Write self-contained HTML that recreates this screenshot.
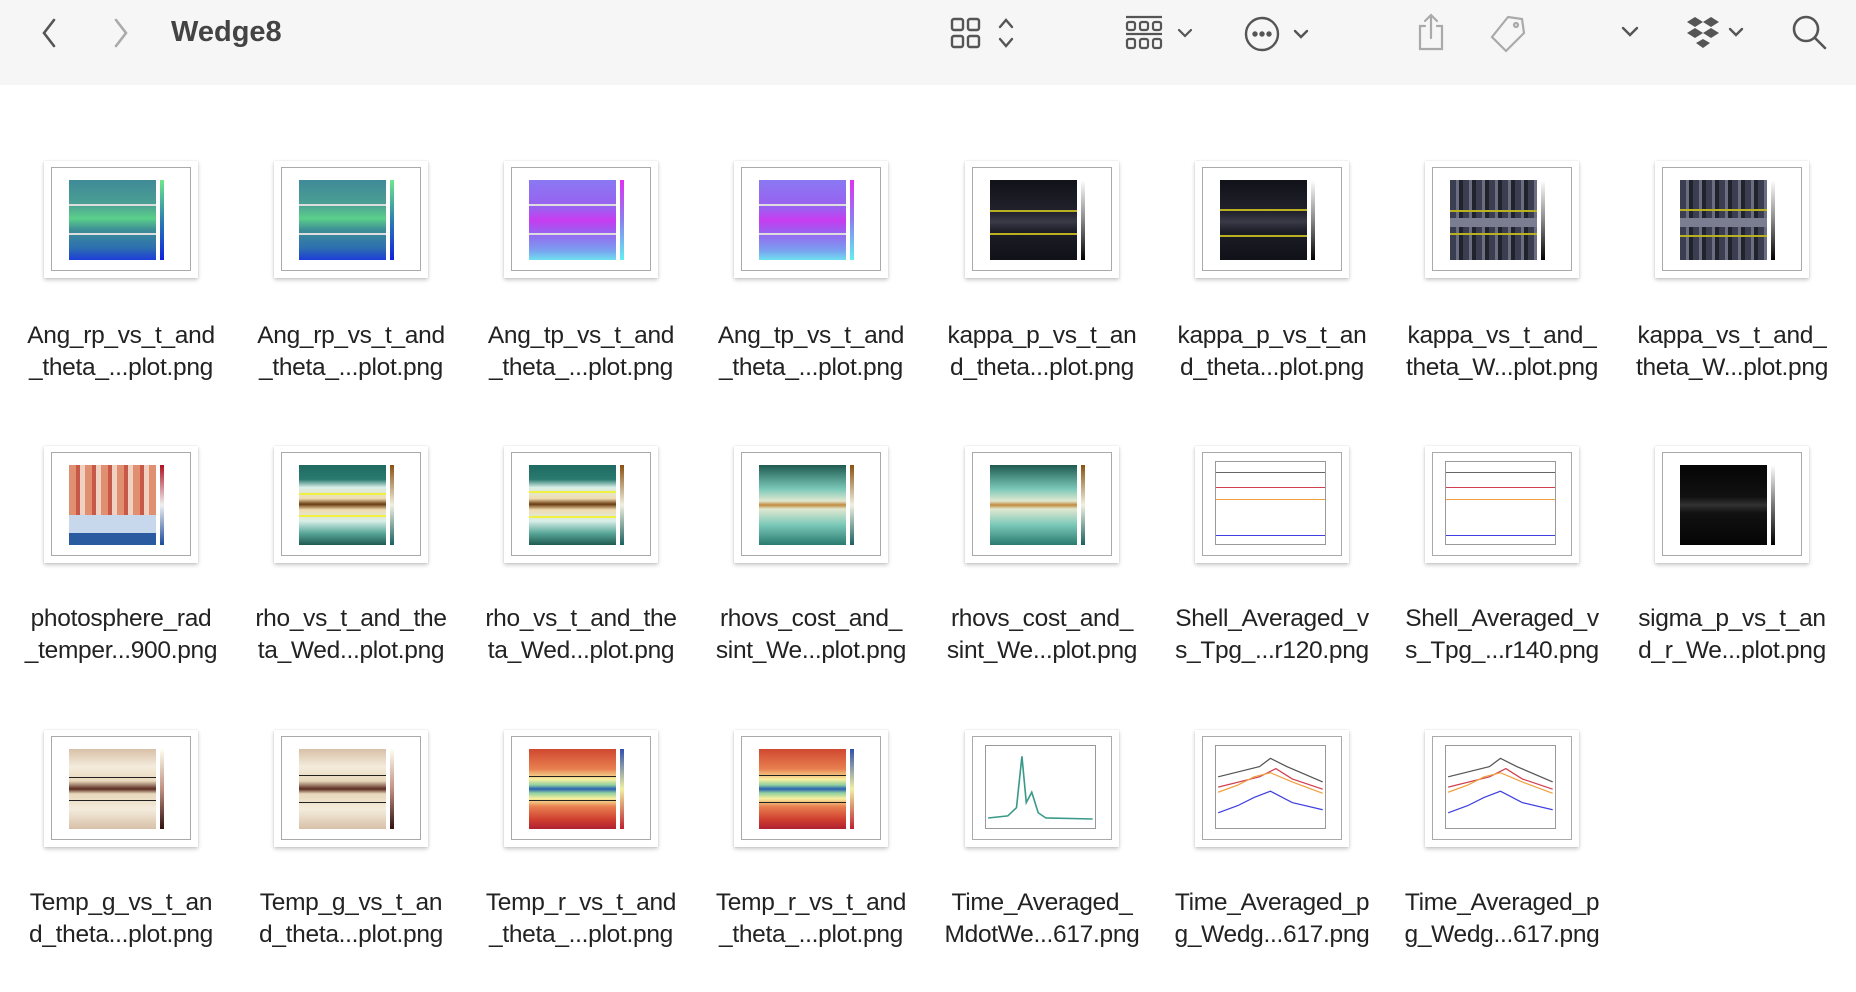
<!DOCTYPE html>
<html><head><meta charset="utf-8"><style>
*{margin:0;padding:0;box-sizing:border-box}
body{width:1856px;height:992px;background:#fff;position:relative;overflow:hidden;font-family:"Liberation Sans",sans-serif}
.tb{position:absolute;left:0;top:0;width:1856px;height:85px;background:#f6f6f6}
.title{position:absolute;left:171px;top:16px;font-size:29px;font-weight:bold;color:#444}
.ic{position:absolute}
.cell{position:absolute;width:230px}
.card{position:absolute;left:38px;width:154px;height:117px;background:#fff;box-shadow:0 2px 4px rgba(0,0,0,.22),0 0 1px rgba(0,0,0,.15)}
.frame{position:absolute;left:7px;top:6px;right:7px;bottom:7px;border:1px solid #aaa;background:#fff}
.plot{position:absolute;left:16%;top:16%;width:57%;height:69%}
.cb{position:absolute;left:75.5%;top:16%;width:2.7%;height:69%}
.lab{position:absolute;top:0;left:0;width:230px;text-align:center;font-size:24.5px;line-height:32px;color:#222;letter-spacing:-0.3px}
.ln{position:absolute;left:0;width:100%;height:2px}
.lp{left:13%!important;top:13%!important;width:72%!important;height:72%!important;border:1px solid #999;background:#fff}
</style></head><body>
<div class="tb"></div>
<svg class="ic" style="left:38px;top:16px" width="24" height="34"><path d="M16 4 L6 17 L16 30" fill="none" stroke="#555" stroke-width="2.6" stroke-linecap="round"/></svg>
<svg class="ic" style="left:108px;top:16px" width="24" height="34"><path d="M8 4 L18 17 L8 30" fill="none" stroke="#aaa" stroke-width="2.6" stroke-linecap="round"/></svg>
<div class="title">Wedge8</div>
<svg class="ic" style="left:950px;top:17px" width="80" height="34" fill="none" stroke="#555" stroke-width="2.4">
<rect x="2" y="2" width="11" height="11" rx="2"/><rect x="18" y="2" width="11" height="11" rx="2"/><rect x="2" y="19" width="11" height="11" rx="2"/><rect x="18" y="19" width="11" height="11" rx="2"/>
<path d="M50 10 L56 3 L62 10 M50 22 L56 29 L62 22" stroke-linecap="round"/></svg>
<svg class="ic" style="left:1124px;top:14px" width="80" height="40" fill="none" stroke="#555" stroke-width="2.2">
<line x1="2" y1="3" x2="38" y2="3"/><line x1="2" y1="20" x2="38" y2="20"/>
<rect x="3" y="8" width="8" height="8" rx="2"/><rect x="16" y="8" width="8" height="8" rx="2"/><rect x="29" y="8" width="8" height="8" rx="2"/>
<rect x="3" y="25" width="8" height="9" rx="2"/><rect x="16" y="25" width="8" height="9" rx="2"/><rect x="29" y="25" width="8" height="9" rx="2"/>
<path d="M55 16 L61 22 L67 16" stroke-linecap="round"/></svg>
<svg class="ic" style="left:1244px;top:15px" width="80" height="38" fill="none" stroke="#555" stroke-width="2.4">
<circle cx="18" cy="19" r="16"/><circle cx="11" cy="19" r="1.5" fill="#555"/><circle cx="18" cy="19" r="1.5" fill="#555"/><circle cx="25" cy="19" r="1.5" fill="#555"/>
<path d="M51 16 L57 22 L63 16" stroke-linecap="round"/></svg>
<svg class="ic" style="left:1414px;top:12px" width="36" height="40" fill="none" stroke="#aaa" stroke-width="2.2">
<path d="M11 14 H6 V37 H28 V14 H23 M17 26 V3 M11 9 L17 3 L23 9" stroke-linecap="round"/></svg>
<svg class="ic" style="left:1488px;top:14px" width="40" height="40" fill="none" stroke="#aaa" stroke-width="2.2">
<path d="M20 3 L34 5 L36 19 L18 37 L4 23 Z"/><circle cx="28" cy="11" r="2"/></svg>
<svg class="ic" style="left:1620px;top:24px" width="20" height="16" fill="none" stroke="#555" stroke-width="2.4"><path d="M3 4 L10 11 L17 4" stroke-linecap="round"/></svg>
<svg class="ic" style="left:1686px;top:16px" width="70" height="34" fill="#555">
<path d="M9 1 L17 6 L9 11 L1 6Z M25 1 L33 6 L25 11 L17 6Z M9 12 L17 17 L9 22 L1 17Z M25 12 L33 17 L25 22 L17 17Z M17 23 L24 27 L17 32 L10 27Z"/>
<path d="M44 13 L50 19 L56 13" fill="none" stroke="#555" stroke-width="2.4" stroke-linecap="round"/></svg>
<svg class="ic" style="left:1790px;top:13px" width="40" height="40" fill="none" stroke="#555" stroke-width="2.6">
<circle cx="16" cy="16" r="12"/><path d="M25 25 L35 35" stroke-linecap="round"/></svg>

<!-- Row 1 -->
<div class="cell" style="left:6px;top:161px"><div class="card"><div class="frame"></div><div class="plot" style="background:linear-gradient(#3f8a98,#4a9f93 30%,#5bd08a 48%,#3e8f95 62%,#2d6fb0 85%,#1d3ed8)"><div class="ln" style="top:30%;background:#ddd"></div><div class="ln" style="top:66%;background:#ddd"></div></div><div class="cb" style="background:linear-gradient(#6ee88a,#2c7fb0,#1020e0)"></div></div><div class="lab" style="top:159px">Ang_rp_vs_t_and<br>_theta_...plot.png</div></div>
<div class="cell" style="left:236px;top:161px"><div class="card"><div class="frame"></div><div class="plot" style="background:linear-gradient(#3f8a98,#4a9f93 30%,#5bd08a 48%,#3e8f95 62%,#2d6fb0 85%,#1d3ed8)"><div class="ln" style="top:30%;background:#ddd"></div><div class="ln" style="top:66%;background:#ddd"></div></div><div class="cb" style="background:linear-gradient(#6ee88a,#2c7fb0,#1020e0)"></div></div><div class="lab" style="top:159px">Ang_rp_vs_t_and<br>_theta_...plot.png</div></div>
<div class="cell" style="left:466px;top:161px"><div class="card"><div class="frame"></div><div class="plot" style="background:linear-gradient(#8a78f2,#9a60f0 35%,#c83cf0 50%,#9a60f0 65%,#7aa0f0 88%,#70e0f0)"><div class="ln" style="top:30%;background:#ddd"></div><div class="ln" style="top:66%;background:#ddd"></div></div><div class="cb" style="background:linear-gradient(#e030f0,#8a80f0,#60f0f0)"></div></div><div class="lab" style="top:159px">Ang_tp_vs_t_and<br>_theta_...plot.png</div></div>
<div class="cell" style="left:696px;top:161px"><div class="card"><div class="frame"></div><div class="plot" style="background:linear-gradient(#8a78f2,#9a60f0 35%,#c83cf0 50%,#9a60f0 65%,#7aa0f0 88%,#70e0f0)"><div class="ln" style="top:30%;background:#ddd"></div><div class="ln" style="top:66%;background:#ddd"></div></div><div class="cb" style="background:linear-gradient(#e030f0,#8a80f0,#60f0f0)"></div></div><div class="lab" style="top:159px">Ang_tp_vs_t_and<br>_theta_...plot.png</div></div>
<div class="cell" style="left:927px;top:161px"><div class="card"><div class="frame"></div><div class="plot" style="background:linear-gradient(#111118,#22222e 40%,#3a3a48 52%,#1c1c26 65%,#111118)"><div class="ln" style="top:38%;background:#b8b020"></div><div class="ln" style="top:66%;background:#b8b020"></div></div><div class="cb" style="background:linear-gradient(#fff,#888,#000)"></div></div><div class="lab" style="top:159px">kappa_p_vs_t_an<br>d_theta...plot.png</div></div>
<div class="cell" style="left:1157px;top:161px"><div class="card"><div class="frame"></div><div class="plot" style="background:linear-gradient(#111118,#22222e 40%,#3a3a48 52%,#1c1c26 65%,#111118)"><div class="ln" style="top:36%;background:#b8b020"></div><div class="ln" style="top:68%;background:#b8b020"></div></div><div class="cb" style="background:linear-gradient(#fff,#888,#000)"></div></div><div class="lab" style="top:159px">kappa_p_vs_t_an<br>d_theta...plot.png</div></div>
<div class="cell" style="left:1387px;top:161px"><div class="card"><div class="frame"></div><div class="plot" style="background:repeating-linear-gradient(90deg,#3a3e50 0 6px,#6a6e80 6px 9px,#20222c 9px 13px),#444"><div style="position:absolute;left:0;top:48%;width:100%;height:10%;background:#7a7e90"></div><div class="ln" style="top:38%;background:#b8b020"></div><div class="ln" style="top:66%;background:#b8b020"></div></div><div class="cb" style="background:linear-gradient(#fff,#888,#000)"></div></div><div class="lab" style="top:159px">kappa_vs_t_and_<br>theta_W...plot.png</div></div>
<div class="cell" style="left:1617px;top:161px"><div class="card"><div class="frame"></div><div class="plot" style="background:repeating-linear-gradient(90deg,#3a3e50 0 6px,#6a6e80 6px 9px,#20222c 9px 13px),#444"><div style="position:absolute;left:0;top:48%;width:100%;height:10%;background:#7a7e90"></div><div class="ln" style="top:36%;background:#b8b020"></div><div class="ln" style="top:68%;background:#b8b020"></div></div><div class="cb" style="background:linear-gradient(#fff,#888,#000)"></div></div><div class="lab" style="top:159px">kappa_vs_t_and_<br>theta_W...plot.png</div></div>

<!-- Row 2 -->
<div class="cell" style="left:6px;top:446px"><div class="card"><div class="frame"></div><div class="plot" style="background:repeating-linear-gradient(90deg,#e09070 0 7px,#c85848 7px 11px,#f0d0c0 11px 16px);"><div style="position:absolute;left:0;top:62%;width:100%;height:22%;background:#c8d8ec"></div><div style="position:absolute;left:0;top:84%;width:100%;height:16%;background:#2a5aa0"></div></div><div class="cb" style="background:linear-gradient(#b01020,#f0f0f0,#1a4a9a)"></div></div><div class="lab" style="top:157px">photosphere_rad<br>_temper...900.png</div></div>
<div class="cell" style="left:236px;top:446px"><div class="card"><div class="frame"></div><div class="plot" style="background:linear-gradient(#1f6a60,#2a7a70 18%,#d8efe8 28%,#f0dcb0 42%,#6a3a10 49%,#f0dcb0 56%,#d8efe8 70%,#5aa89a 85%,#1f5a50)"><div class="ln" style="top:35%;background:#f0f040"></div><div class="ln" style="top:62%;background:#f0f040"></div></div><div class="cb" style="background:linear-gradient(#8a5010,#f0f0e0,#1a6060)"></div></div><div class="lab" style="top:157px">rho_vs_t_and_the<br>ta_Wed...plot.png</div></div>
<div class="cell" style="left:466px;top:446px"><div class="card"><div class="frame"></div><div class="plot" style="background:linear-gradient(#1f6a60,#2a7a70 18%,#d8efe8 28%,#f0dcb0 42%,#6a3a10 49%,#f0dcb0 56%,#d8efe8 70%,#5aa89a 85%,#1f5a50)"><div class="ln" style="top:33%;background:#f0f040"></div><div class="ln" style="top:64%;background:#f0f040"></div></div><div class="cb" style="background:linear-gradient(#8a5010,#f0f0e0,#1a6060)"></div></div><div class="lab" style="top:157px">rho_vs_t_and_the<br>ta_Wed...plot.png</div></div>
<div class="cell" style="left:696px;top:446px"><div class="card"><div class="frame"></div><div class="plot" style="background:linear-gradient(#1f5a50,#7ac8b8 30%,#e0e8d0 45%,#c08a40 50%,#e0e8d0 55%,#7ac8b8 75%,#2a7a70)"></div><div class="cb" style="background:linear-gradient(#8a5010,#f0f0e0,#1a6060)"></div></div><div class="lab" style="top:157px">rhovs_cost_and_<br>sint_We...plot.png</div></div>
<div class="cell" style="left:927px;top:446px"><div class="card"><div class="frame"></div><div class="plot" style="background:linear-gradient(#1f5a50,#7ac8b8 30%,#e0e8d0 45%,#c08a40 50%,#e0e8d0 55%,#7ac8b8 75%,#2a7a70)"></div><div class="cb" style="background:linear-gradient(#8a5010,#f0f0e0,#1a6060)"></div></div><div class="lab" style="top:157px">rhovs_cost_and_<br>sint_We...plot.png</div></div>
<div class="cell" style="left:1157px;top:446px"><div class="card"><div class="frame"></div><div class="plot lp"><div class="ln" style="top:12%;height:1px;background:#666"></div><div class="ln" style="top:30%;height:1px;background:#d04050"></div><div class="ln" style="top:45%;height:1px;background:#f0a040"></div><div class="ln" style="top:88%;height:1px;background:#4040e0"></div></div></div><div class="lab" style="top:157px">Shell_Averaged_v<br>s_Tpg_...r120.png</div></div>
<div class="cell" style="left:1387px;top:446px"><div class="card"><div class="frame"></div><div class="plot lp"><div class="ln" style="top:12%;height:1px;background:#666"></div><div class="ln" style="top:30%;height:1px;background:#d04050"></div><div class="ln" style="top:45%;height:1px;background:#f0a040"></div><div class="ln" style="top:88%;height:1px;background:#4040e0"></div></div></div><div class="lab" style="top:157px">Shell_Averaged_v<br>s_Tpg_...r140.png</div></div>
<div class="cell" style="left:1617px;top:446px"><div class="card"><div class="frame"></div><div class="plot" style="background:linear-gradient(#050505,#111 40%,#333 50%,#111 60%,#050505)"></div><div class="cb" style="background:linear-gradient(#fff,#777,#000)"></div></div><div class="lab" style="top:157px">sigma_p_vs_t_an<br>d_r_We...plot.png</div></div>

<!-- Row 3 -->
<div class="cell" style="left:6px;top:730px"><div class="card"><div class="frame"></div><div class="plot" style="background:linear-gradient(#d8c0a8,#f4ecdc 22%,#e8d8bc 40%,#5a2a20 50%,#e8d8bc 56%,#f4ecdc 75%,#d8c0a8)"><div class="ln" style="top:35%;height:1px;background:#222"></div><div class="ln" style="top:64%;height:1px;background:#222"></div></div><div class="cb" style="background:linear-gradient(#fffff0,#c09080,#301010)"></div></div><div class="lab" style="top:157px">Temp_g_vs_t_an<br>d_theta...plot.png</div></div>
<div class="cell" style="left:236px;top:730px"><div class="card"><div class="frame"></div><div class="plot" style="background:linear-gradient(#d8c0a8,#f4ecdc 22%,#e8d8bc 40%,#5a2a20 50%,#e8d8bc 56%,#f4ecdc 75%,#d8c0a8)"><div class="ln" style="top:33%;height:1px;background:#222"></div><div class="ln" style="top:66%;height:1px;background:#222"></div></div><div class="cb" style="background:linear-gradient(#fffff0,#c09080,#301010)"></div></div><div class="lab" style="top:157px">Temp_g_vs_t_an<br>d_theta...plot.png</div></div>
<div class="cell" style="left:466px;top:730px"><div class="card"><div class="frame"></div><div class="plot" style="background:linear-gradient(#d04830,#e88050 25%,#f8f0a0 38%,#90d0a0 45%,#2a60b0 50%,#90d0a0 55%,#f8f0a0 62%,#e88050 72%,#d04030 88%,#b02030)"><div class="ln" style="top:34%;height:1px;background:#222"></div><div class="ln" style="top:64%;height:1px;background:#222"></div></div><div class="cb" style="background:linear-gradient(#3050b0,#f0f0a0,#c02030)"></div></div><div class="lab" style="top:157px">Temp_r_vs_t_and<br>_theta_...plot.png</div></div>
<div class="cell" style="left:696px;top:730px"><div class="card"><div class="frame"></div><div class="plot" style="background:linear-gradient(#d04830,#e88050 25%,#f8f0a0 38%,#90d0a0 45%,#2a60b0 50%,#90d0a0 55%,#f8f0a0 62%,#e88050 72%,#d04030 88%,#b02030)"><div class="ln" style="top:32%;height:1px;background:#222"></div><div class="ln" style="top:66%;height:1px;background:#222"></div></div><div class="cb" style="background:linear-gradient(#3050b0,#f0f0a0,#c02030)"></div></div><div class="lab" style="top:157px">Temp_r_vs_t_and<br>_theta_...plot.png</div></div>
<div class="cell" style="left:927px;top:730px"><div class="card"><div class="frame"></div><svg class="plot lp" viewBox="0 0 100 80" preserveAspectRatio="none"><path d="M2 70 L20 68 L28 60 L33 10 L37 55 L42 45 L48 65 L55 70 L98 71" fill="none" stroke="#3a9a8a" stroke-width="1.5"/></svg></div><div class="lab" style="top:157px">Time_Averaged_<br>MdotWe...617.png</div></div>
<div class="cell" style="left:1157px;top:730px"><div class="card"><div class="frame"></div><svg class="plot lp" viewBox="0 0 100 80" preserveAspectRatio="none"><path d="M2 30 L40 20 L50 12 L65 20 L98 35" fill="none" stroke="#555" stroke-width="1.2"/><path d="M2 40 L40 30 L55 22 L70 32 L98 42" fill="none" stroke="#d04050" stroke-width="1.2"/><path d="M2 45 L20 38 L35 30 L50 26 L70 35 L98 46" fill="none" stroke="#f0a040" stroke-width="1.2"/><path d="M2 65 L20 58 L35 50 L50 44 L70 55 L98 62" fill="none" stroke="#4040e0" stroke-width="1.2"/></svg></div><div class="lab" style="top:157px">Time_Averaged_p<br>g_Wedg...617.png</div></div>
<div class="cell" style="left:1387px;top:730px"><div class="card"><div class="frame"></div><svg class="plot lp" viewBox="0 0 100 80" preserveAspectRatio="none"><path d="M2 30 L40 20 L50 12 L65 20 L98 35" fill="none" stroke="#555" stroke-width="1.2"/><path d="M2 40 L40 30 L55 22 L70 32 L98 42" fill="none" stroke="#d04050" stroke-width="1.2"/><path d="M2 45 L20 38 L35 30 L50 26 L70 35 L98 46" fill="none" stroke="#f0a040" stroke-width="1.2"/><path d="M2 65 L20 58 L35 50 L50 44 L70 55 L98 62" fill="none" stroke="#4040e0" stroke-width="1.2"/></svg></div><div class="lab" style="top:157px">Time_Averaged_p<br>g_Wedg...617.png</div></div>
</body></html>
